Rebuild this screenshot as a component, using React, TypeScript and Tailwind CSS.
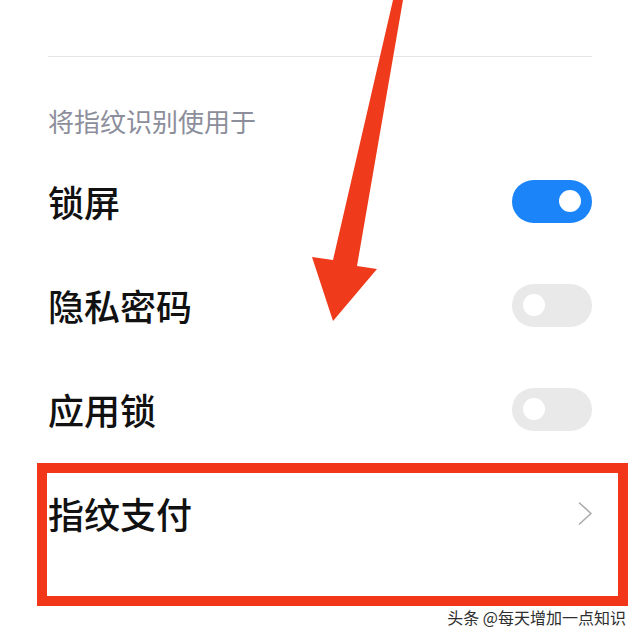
const font = { fontFamily: '"Noto Sans CJK SC", "Noto Sans", sans-serif' };

function Toggle({ on }: { on: boolean }) {
  return (
    <div
      className={`w-[80px] h-[43px] rounded-full flex items-center px-[11px] ${
        on ? "bg-[#1a84f8] justify-end" : "bg-[#e9e9e9] justify-start"
      }`}
    >
      <div className="w-[22px] h-[22px] rounded-full bg-white" />
    </div>
  );
}

function Row({ label, on }: { label: string; on: boolean }) {
  return (
    <div className="h-[104px] flex items-center justify-between">
      <span className="text-[36px] leading-none font-medium text-[#111]">{label}</span>
      <Toggle on={on} />
    </div>
  );
}

export default function App() {
  return (
    <div className="relative w-[640px] h-[640px] overflow-hidden bg-white" style={font}>
      <div className="px-[48px] pt-[56px]">
        {/* divider */}
        <div className="h-px bg-[#e6e6ea]" />

        {/* section title */}
        <div className="mt-[43px] h-[40px] flex items-center text-[26px] text-[#8c8e9b]">
          将指纹识别使用于
        </div>

        <div className="mt-[9px]">
          <Row label="锁屏" on />
          <Row label="隐私密码" on={false} />
          <Row label="应用锁" on={false} />
        </div>
      </div>

      {/* highlighted row */}
      <div className="ml-[37px] mt-[2px] w-[591px] h-[143px] border-[10px] border-[#f1361a]">
        <div className="h-[80px] flex items-center justify-between pl-[1px] pr-[25px]">
          <span className="text-[36px] leading-none font-medium text-[#111]">指纹支付</span>
          <svg width="15" height="23" viewBox="0 0 15 23" fill="none">
            <polyline
              points="1.5,1 13,11.5 1.5,22"
              stroke="#ababab"
              strokeWidth="1.6"
              strokeLinecap="round"
              strokeLinejoin="round"
            />
          </svg>
        </div>
      </div>

      {/* arrow */}
      <svg className="absolute left-0 top-0 pointer-events-none" width="640" height="640" viewBox="0 0 640 640">
        <polygon
          fill="#ef3a1b"
          points="393,0 403,0 357,266 377,269 333,321 312,257 333,260"
        />
      </svg>

      {/* watermark */}
      <div
        className="absolute right-[14px] top-[606px] text-[16px] leading-[22px] text-[#2e2e2e] whitespace-nowrap"
        style={{ textShadow: "0 0 2px #fff, 0 0 2px #fff" }}
      >
        头条 @每天增加一点知识
      </div>
    </div>
  );
}
